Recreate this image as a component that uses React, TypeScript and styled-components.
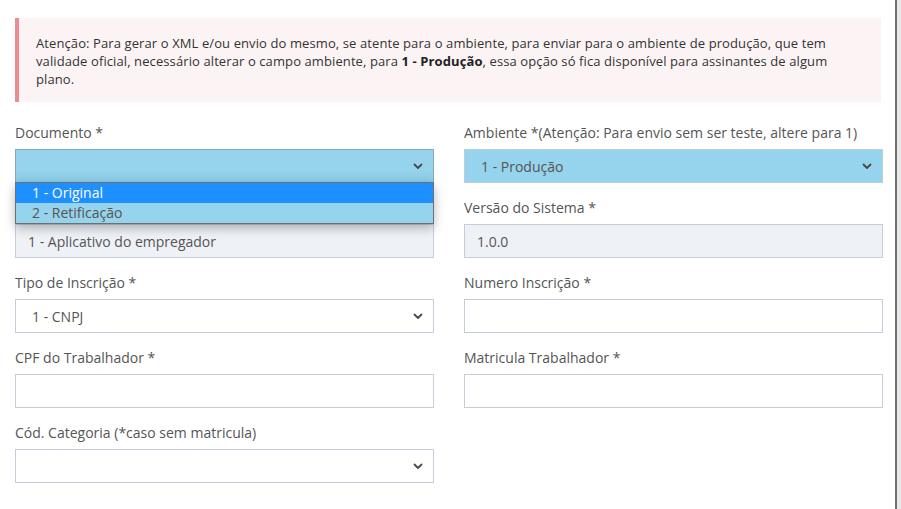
import React from 'react';
import styled, { createGlobalStyle } from 'styled-components';

const GlobalStyle = createGlobalStyle`
  html, body {
    margin: 0;
    padding: 0;
    background: #ffffff;
    font-family: 'Open Sans', 'Noto Sans', Arial, sans-serif;
  }
`;

const Page = styled.div`
  display: flex;
  width: 901px;
  height: 509px;
  overflow: hidden;
`;

const Modal = styled.div`
  width: 897px;
  flex: none;
  box-sizing: border-box;
  padding: 18px 14px 0 15px;
  background: #ffffff;
  border-right: 2px solid #6f6f6f;
`;

const Backdrop = styled.div`
  flex: 1;
  background: #e9e9e9;
`;

const Alert = styled.div`
  background: #fcf4f4;
  border-left: 4px solid #ee8a90;
  padding: 16px 40px 14px 17px;
  color: #333333;
  font-size: 13px;
  line-height: 18px;
  letter-spacing: 0.1px;
  margin-bottom: 21px;

  b {
    font-weight: 700;
    color: #222;
  }
`;

const FormGrid = styled.div`
  display: grid;
  grid-template-columns: 419px 419px;
  column-gap: 30px;
  row-gap: 15px;
`;

const Field = styled.div`
  position: relative;
  display: flex;
  flex-direction: column;
`;

const Label = styled.label`
  font-size: 14px;
  line-height: 20px;
  color: #555555;
  margin-bottom: 6px;
  white-space: nowrap;
`;

type Tone = 'plain' | 'blue' | 'focus' | 'disabled';

const Box = styled.div<{ $tone: Tone; $select?: boolean }>`
  box-sizing: border-box;
  height: 34px;
  display: flex;
  align-items: center;
  justify-content: space-between;
  padding: 0 ${(p) => (p.$select ? '10px' : '12px')} 0 ${(p) => (p.$select ? '16px' : '12px')};
  font-size: 14px;
  color: #555555;
  border: 1px solid
    ${(p) => (p.$tone === 'focus' ? '#86a6c2' : p.$tone === 'blue' ? '#b7cfe0' : '#c5cddb')};
  background: ${(p) =>
    p.$tone === 'blue'
      ? '#96d3ec'
      : p.$tone === 'focus'
      ? 'linear-gradient(#96d3ec 0%, #96d3ec 60%, #8ccbe6 100%)'
      : p.$tone === 'disabled'
      ? '#eef1f6'
      : '#ffffff'};
`;

const Chevron = () => (
  <svg width="10" height="7" viewBox="0 0 10 7" fill="none">
    <path d="M1.5 1.5 L5 5 L8.5 1.5" stroke="#4a4a4a" strokeWidth="1.8" strokeLinecap="round" strokeLinejoin="round" />
  </svg>
);

const OptionList = styled.ul`
  position: absolute;
  left: 0;
  right: 0;
  top: 59px;
  margin: 0;
  padding: 0;
  list-style: none;
  border: 1px solid #6f6f6f;
  box-shadow: 0 4px 10px rgba(0, 0, 0, 0.28);
  background: #96d3ec;
  z-index: 2;
`;

const Option = styled.li<{ $active?: boolean }>`
  height: 20px;
  line-height: 20px;
  padding-left: 16px;
  font-size: 14px;
  color: ${(p) => (p.$active ? '#ffffff' : '#555555')};
  background: ${(p) => (p.$active ? '#1e8fff' : 'transparent')};
`;

type FieldDef = {
  label: string;
  value?: string;
  tone: Tone;
  select?: boolean;
  open?: string[];
};

const fields: FieldDef[] = [
  { label: 'Documento *', tone: 'focus', select: true, open: ['1 - Original', '2 - Retificação'] },
  { label: 'Ambiente *(Atenção: Para envio sem ser teste, altere para 1)', value: '1 - Produção', tone: 'blue', select: true },
  { label: 'Processo de Emissão *', value: '1 - Aplicativo do empregador', tone: 'disabled' },
  { label: 'Versão do Sistema *', value: '1.0.0', tone: 'disabled' },
  { label: 'Tipo de Inscrição *', value: '1 - CNPJ', tone: 'plain', select: true },
  { label: 'Numero Inscrição *', tone: 'plain' },
  { label: 'CPF do Trabalhador *', tone: 'plain' },
  { label: 'Matricula Trabalhador *', tone: 'plain' },
  { label: 'Cód. Categoria (*caso sem matricula)', tone: 'plain', select: true },
];

export default function App() {
  return (
    <>
      <GlobalStyle />
      <Page>
        <Modal>
          <Alert>
            Atenção: Para gerar o XML e/ou envio do mesmo, se atente para o ambiente, para enviar para o ambiente de
            produção, que tem validade oficial, necessário alterar o campo ambiente, para <b>1 - Produção</b>, essa opção
            só fica disponível para assinantes de algum plano.
          </Alert>
          <FormGrid>
            {fields.map((f) => (
              <Field key={f.label}>
                <Label>{f.label}</Label>
                <Box $tone={f.tone} $select={f.select}>
                  <span>{f.value}</span>
                  {f.select && <Chevron />}
                </Box>
                {f.open && (
                  <OptionList>
                    {f.open.map((o, i) => (
                      <Option key={o} $active={i === 0}>
                        {o}
                      </Option>
                    ))}
                  </OptionList>
                )}
              </Field>
            ))}
          </FormGrid>
        </Modal>
        <Backdrop />
      </Page>
    </>
  );
}
